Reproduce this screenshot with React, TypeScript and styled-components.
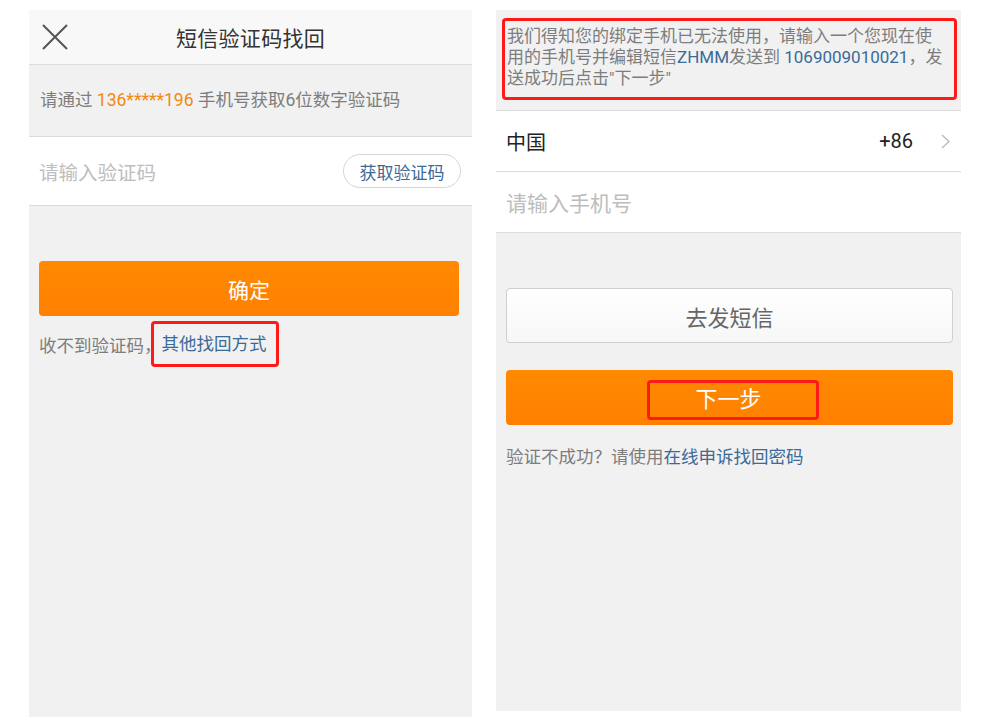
import * as React from "react";
import styled, { createGlobalStyle } from "styled-components";

const GlobalStyle = createGlobalStyle`
  body {
    margin: 0;
    background: #fff;
    font-family: Roboto, "Noto Sans CJK SC", sans-serif;
  }
`;

const Page = styled.div`
  display: flex;
  align-items: flex-start;
  gap: 24px;
  padding: 10px 0 0 29px;
`;

const Panel = styled.div<{ $width: number; $height: number }>`
  width: ${(p) => p.$width}px;
  height: ${(p) => p.$height}px;
  background: #f1f1f1;
  display: flex;
  flex-direction: column;
`;

const Header = styled.div`
  height: 54px;
  background: #f8f8f8;
  border-bottom: 1px solid #dcdcdc;
  display: grid;
  grid-template-columns: 1fr auto 1fr;
  align-items: center;
  padding: 0 13px;
`;

const Title = styled.div`
  font-size: 21px;
  color: #333;
  letter-spacing: 0.3px;
`;

const Info = styled.div`
  height: 72px;
  border-bottom: 1px solid #dcdcdc;
  display: flex;
  align-items: center;
  padding: 0 11px 4px;
  box-sizing: border-box;
  font-size: 17.5px;
  color: #7d7d7d;
`;

const Orange = styled.span`
  color: #f5880f;
`;

const Blue = styled.span`
  color: #3b6a98;
`;

const Row = styled.div<{ $height: number }>`
  height: ${(p) => p.$height}px;
  background: #fff;
  border-bottom: 1px solid #dcdcdc;
  display: flex;
  align-items: center;
  justify-content: space-between;
  padding: 0 11px 0 10px;
`;

const Placeholder = styled.span<{ $size: number }>`
  font-size: ${(p) => p.$size}px;
  color: #bdbdbd;
`;

const Pill = styled.div`
  width: 118px;
  height: 34px;
  box-sizing: border-box;
  border: 1px solid #d6d6d6;
  border-radius: 17px;
  display: flex;
  align-items: center;
  justify-content: center;
  font-size: 17px;
  color: #3b6a98;
  background: #fff;
`;

const Body = styled.div<{ $right: number }>`
  padding: 55px ${(p) => p.$right}px 0 10px;
  display: flex;
  flex-direction: column;
`;

const Button = styled.div<{ $light?: boolean; $gap?: number }>`
  height: 55px;
  margin-top: ${(p) => p.$gap ?? 0}px;
  box-sizing: border-box;
  border-radius: 4px;
  display: flex;
  align-items: center;
  justify-content: center;
  font-size: ${(p) => (p.$light ? 22 : 21)}px;
  color: ${(p) => (p.$light ? "#666" : "#fff")};
  background: ${(p) =>
    p.$light
      ? "linear-gradient(#ffffff, #f7f7f7)"
      : "linear-gradient(#ff8a00, #ff8000)"};
  border: ${(p) => (p.$light ? "1px solid #cfcfcf" : "none")};
`;

const Note = styled.div<{ $gap: number }>`
  margin-top: ${(p) => p.$gap}px;
  display: flex;
  align-items: center;
  font-size: 17.5px;
  color: #7d7d7d;
`;

const Mark = styled.div<{ $pad: string }>`
  border: 3px solid #ff1a1a;
  border-radius: 4px;
  padding: ${(p) => p.$pad};
`;

const LinkText = styled.span`
  font-size: 17.5px;
  line-height: 22px;
  color: #3b6a98;
`;

const Notice = styled.div`
  height: 101px;
  box-sizing: border-box;
  border-bottom: 1px solid #dcdcdc;
  padding: 8px 4px 0 6px;
`;

const NoticeText = styled.div`
  font-size: 17px;
  line-height: 21px;
  color: #7d7d7d;
  white-space: nowrap;
`;

const Country = styled.span`
  font-size: 20px;
  color: #222;
`;

const Code = styled.div`
  display: flex;
  align-items: center;
  gap: 28px;
  font-size: 20px;
  color: #222;
`;

const NextLabel = styled.span`
  font-size: 22px;
  line-height: 28px;
`;

const CloseIcon = () => (
  <svg width="26" height="26" viewBox="0 0 26 26">
    <path d="M1 1 L25 25 M25 1 L1 25" stroke="#555" strokeWidth="2" fill="none" />
  </svg>
);

const Chevron = () => (
  <svg width="9" height="15" viewBox="0 0 9 15">
    <path d="M1 1 L8 7.5 L1 14" stroke="#bbb" strokeWidth="1.4" fill="none" />
  </svg>
);

const App: React.FC = () => {
  return (
    <>
      <GlobalStyle />
      <Page>
        <Panel $width={443} $height={707}>
          <Header>
            <CloseIcon />
            <Title>短信验证码找回</Title>
            <span />
          </Header>
          <Info>
            <span>
              请通过 <Orange>136*****196</Orange> 手机号获取6位数字验证码
            </span>
          </Info>
          <Row $height={68}>
            <Placeholder $size={19.5}>请输入验证码</Placeholder>
            <Pill>获取验证码</Pill>
          </Row>
          <Body $right={13}>
            <Button>确定</Button>
            <Note $gap={5}>
              <span>收不到验证码，</span>
              <Mark $pad="9px 9px 9px 8px" style={{ marginLeft: -11 }}>
                <LinkText>其他找回方式</LinkText>
              </Mark>
            </Note>
          </Body>
        </Panel>

        <Panel $width={465} $height={701}>
          <Notice>
            <Mark $pad="5px 2px 8px 2px">
              <NoticeText>
                我们得知您的绑定手机已无法使用，请输入一个您现在使
                <br />
                用的手机号并编辑短信<Blue>ZHMM</Blue>发送到 <Blue>1069009010021</Blue>，发
                <br />
                送成功后点击"下一步"
              </NoticeText>
            </Mark>
          </Notice>
          <Row $height={60}>
            <Country>中国</Country>
            <Code>
              <span>+86</span>
              <Chevron />
            </Code>
          </Row>
          <Row $height={60}>
            <Placeholder $size={21}>请输入手机号</Placeholder>
          </Row>
          <Body $right={8}>
            <Button $light>去发短信</Button>
            <Button $gap={27}>
              <Mark $pad="3px 54px 3px 45px" style={{ marginLeft: 7, marginTop: 5 }}>
                <NextLabel>下一步</NextLabel>
              </Mark>
            </Button>
            <Note $gap={18}>
              <span>
                验证不成功？请使用<Blue>在线申诉找回密码</Blue>
              </span>
            </Note>
          </Body>
        </Panel>
      </Page>
    </>
  );
};

export default App;
